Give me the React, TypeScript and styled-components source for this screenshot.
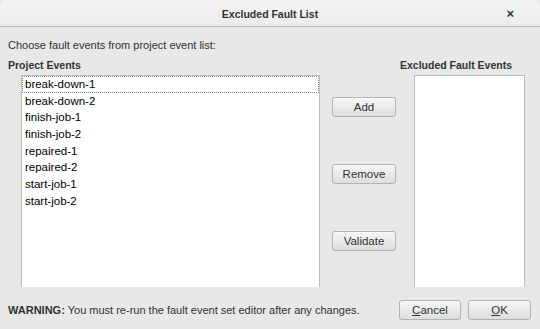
import React from 'react';
import styled, { createGlobalStyle } from 'styled-components';

const GlobalStyle = createGlobalStyle`
  html, body {
    margin: 0;
    padding: 0;
    background: #e8e8e7;
  }
  body {
    font-family: "Liberation Sans", "DejaVu Sans", sans-serif;
    font-size: 11px;
    color: #2e3436;
  }
`;

const Dialog = styled.div`
  width: 540px;
  height: 329px;
  display: flex;
  flex-direction: column;
  background: #e8e8e7;
  overflow: hidden;
`;

const TitleBar = styled.div`
  height: 26px;
  flex: none;
  display: grid;
  grid-template-columns: 40px 1fr 40px;
  align-items: center;
  background: linear-gradient(#f4f4f3, #ececeb);
  border-bottom: 1px solid #bdbdb9;
  border-radius: 6px 6px 0 0;
`;

const Title = styled.div`
  grid-column: 2;
  text-align: center;
  font-weight: bold;
  font-size: 10.5px;
  padding-top: 1px;
  color: #2e3436;
`;

const Close = styled.div`
  justify-self: end;
  margin-right: 26px;
  font-weight: bold;
  font-size: 13px;
  line-height: 1;
`;

const Body = styled.div`
  flex: 1;
  display: flex;
  flex-direction: column;
  padding: 10px 15px 0 8px;
`;

const Prompt = styled.div`
  height: 16px;
  line-height: 16px;
  margin-bottom: 5px;
`;

const Columns = styled.div`
  display: grid;
  grid-template-columns: 312px 80px 1fr;
  grid-template-rows: 17px 212px;
`;

const Heading = styled.div`
  font-weight: bold;
  font-size: 10.5px;
  line-height: 14px;
`;

const ListBox = styled.ul<{ $indent: number }>`
  margin: 0 0 0 ${({ $indent }) => $indent}px;
  padding: 0;
  list-style: none;
  background: #ffffff;
  border: 1px solid #bdbdb9;
  border-bottom: none;
  overflow: hidden;
`;

const Item = styled.li<{ $focused?: boolean }>`
  height: 16.7px;
  line-height: 15px;
  padding-left: 2px;
  font-size: 11.5px;
  color: #000000;
  box-sizing: border-box;
  border: 1px dotted ${({ $focused }) => ($focused ? '#888a85' : 'transparent')};
`;

const ButtonColumn = styled.div`
  display: flex;
  flex-direction: column;
  align-items: flex-start;
  padding: 22px 0 0 12px;
  gap: 47px;
`;

const Button = styled.button<{ $width?: number }>`
  width: ${({ $width }) => $width ?? 64}px;
  height: 20px;
  padding: 0;
  font-family: inherit;
  font-size: 11.5px;
  color: #2e3436;
  background: linear-gradient(#f6f6f5, #dededc);
  border: 1px solid #b2b2ae;
  border-radius: 3px;
  box-shadow: 0 1px 0 rgba(255, 255, 255, 0.6) inset;
`;

const Footer = styled.div`
  display: flex;
  align-items: center;
  height: 42px;
  margin-right: -6px;
`;

const Warning = styled.div`
  flex: 1;
  font-size: 11px;
  padding-top: 3px;
`;

const Strong = styled.strong`
  font-weight: bold;
`;

const Actions = styled.div`
  display: flex;
  gap: 7px;
  padding-top: 3px;
`;

const Mnemonic = styled.span`
  text-decoration: underline;
`;

const events = [
  'break-down-1',
  'break-down-2',
  'finish-job-1',
  'finish-job-2',
  'repaired-1',
  'repaired-2',
  'start-job-1',
  'start-job-2',
];

export default function App() {
  return (
    <>
      <GlobalStyle />
      <Dialog>
        <TitleBar>
          <Title>Excluded Fault List</Title>
          <Close>×</Close>
        </TitleBar>
        <Body>
          <Prompt>Choose fault events from project event list:</Prompt>
          <Columns>
            <Heading>Project Events</Heading>
            <div />
            <Heading>Excluded Fault Events</Heading>
            <ListBox $indent={13}>
              {events.map((name, i) => (
                <Item key={name} $focused={i === 0}>
                  {name}
                </Item>
              ))}
            </ListBox>
            <ButtonColumn>
              <Button>Add</Button>
              <Button>Remove</Button>
              <Button>Validate</Button>
            </ButtonColumn>
            <ListBox $indent={14} />
          </Columns>
          <Footer>
            <Warning>
              <Strong>WARNING:</Strong> You must re-run the fault event set editor after any changes.
            </Warning>
            <Actions>
              <Button $width={62}>
                <Mnemonic>C</Mnemonic>ancel
              </Button>
              <Button $width={63}>
                <Mnemonic>O</Mnemonic>K
              </Button>
            </Actions>
          </Footer>
        </Body>
      </Dialog>
    </>
  );
}
